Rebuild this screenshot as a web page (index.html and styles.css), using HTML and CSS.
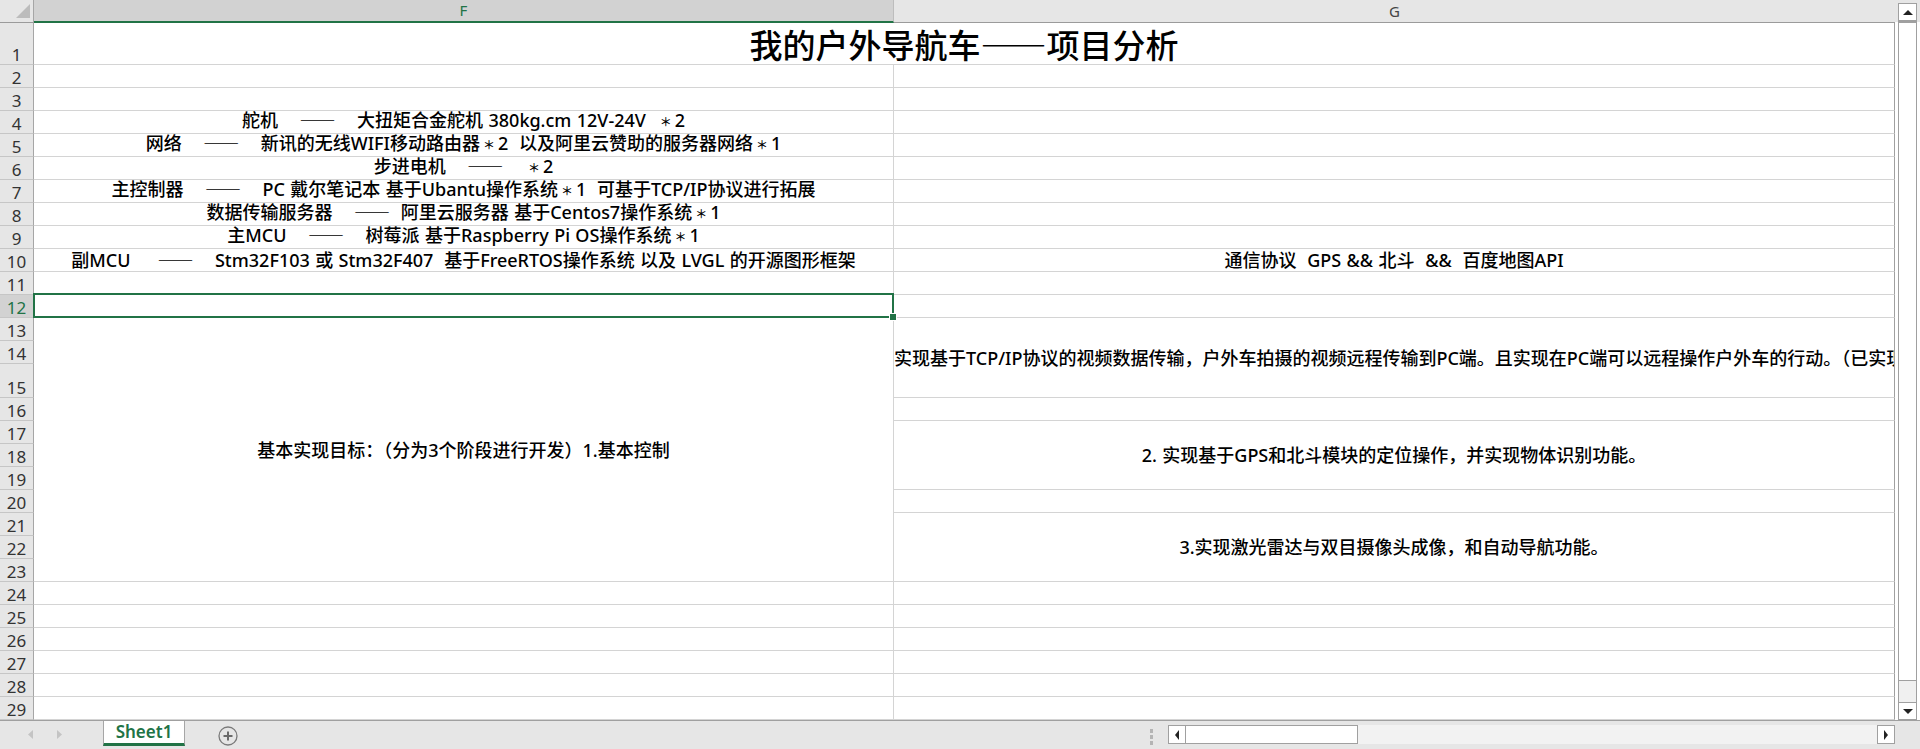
FILE: index.html
```html
<!DOCTYPE html>
<html lang="zh-CN">
<head>
<meta charset="utf-8">
<title>我的户外导航车——项目分析</title>
<link rel="stylesheet" href="styles.css">
</head>
<body>
<div class="app">
  <div class="main">
    <div class="sheet">
      <div class="corner"><svg width="33" height="22" viewBox="0 0 33 22"><polygon points="16,18 30,18 30,4" fill="#bcbcbc"/></svg></div>
      <div class="colhead active">F</div>
      <div class="colhead last">G</div>

      <div class="rh">1</div>
      <div class="c title">我的户外导航车——项目分析</div>

      <div class="rh">2</div><div class="c"></div><div class="c g"></div>
      <div class="rh">3</div><div class="c"></div><div class="c g"></div>
      <div class="rh">4</div><div class="c"><span class="t">舵机    <span class="d">——</span>    大扭矩合金舵机 380kg.cm 12V-24V  <span class="a">＊</span>2</span></div><div class="c g"></div>
      <div class="rh">5</div><div class="c"><span class="t">网络    <span class="d">——</span>    新讯的无线WIFI移动路由器<span class="a">＊</span>2  以及阿里云赞助的服务器网络<span class="a">＊</span>1</span></div><div class="c g"></div>
      <div class="rh">6</div><div class="c"><span class="t">步进电机    <span class="d">——</span>    <span class="a">＊</span>2</span></div><div class="c g"></div>
      <div class="rh">7</div><div class="c"><span class="t">主控制器    <span class="d">——</span>    PC 戴尔笔记本 基于Ubantu操作系统<span class="a">＊</span>1  可基于TCP/IP协议进行拓展</span></div><div class="c g"></div>
      <div class="rh">8</div><div class="c"><span class="t">数据传输服务器    <span class="d">——</span>  阿里云服务器 基于Centos7操作系统<span class="a">＊</span>1</span></div><div class="c g"></div>
      <div class="rh">9</div><div class="c"><span class="t">主MCU    <span class="d">——</span>    树莓派 基于Raspberry Pi OS操作系统<span class="a">＊</span>1</span></div><div class="c g"></div>
      <div class="rh">10</div><div class="c"><span class="t">副MCU     <span class="d">——</span>    Stm32F103 或 Stm32F407  基于FreeRTOS操作系统 以及 LVGL 的开源图形框架</span></div><div class="c g">通信协议  GPS &amp;&amp; 北斗  &amp;&amp;  百度地图API</div>
      <div class="rh">11</div><div class="c"></div><div class="c g"></div>
      <div class="rh selrow">12</div><div class="c selcell"></div><div class="c g"></div>
      <div class="rh">13</div><div class="c mid span11">基本实现目标：（分为3个阶段进行开发）1.基本控制</div><div class="c g mid span3 left">实现基于TCP/IP协议的视频数据传输，户外车拍摄的视频远程传输到PC端。且实现在PC端可以远程操作户外车的行动。（已实现）</div>
      <div class="rh">14</div>
      <div class="rh">15</div>
      <div class="rh">16</div><div class="c g"></div>
      <div class="rh">17</div><div class="c g mid span3">2. 实现基于GPS和北斗模块的定位操作，并实现物体识别功能。</div>
      <div class="rh">18</div>
      <div class="rh">19</div>
      <div class="rh">20</div><div class="c g"></div>
      <div class="rh">21</div><div class="c g mid span3">3.实现激光雷达与双目摄像头成像，和自动导航功能。</div>
      <div class="rh">22</div>
      <div class="rh">23</div>
      <div class="rh">24</div><div class="c"></div><div class="c g"></div>
      <div class="rh">25</div><div class="c"></div><div class="c g"></div>
      <div class="rh">26</div><div class="c"></div><div class="c g"></div>
      <div class="rh">27</div><div class="c"></div><div class="c g"></div>
      <div class="rh">28</div><div class="c"></div><div class="c g"></div>
      <div class="rh">29</div><div class="c"></div><div class="c g"></div>
    </div>
    <div class="vscroll">
      <div class="vbtn"><span class="tri-up"></span></div>
      <div class="vthumb"></div>
      <div class="vtrack"></div>
      <div class="vbtn"><span class="tri-down"></span></div>
    </div>
  </div>
  <div class="tabbar">
    <div class="nav">
      <svg width="103" height="28" viewBox="0 0 103 28"><polygon points="33,9 33,18 28,13.5" fill="#c4c4c4"/><polygon points="57,9 57,18 62,13.5" fill="#c4c4c4"/></svg>
    </div>
    <div class="tab">Sheet1</div>
    <div class="add"><svg width="20" height="20" viewBox="0 0 20 20"><circle cx="10" cy="10" r="9" fill="none" stroke="#7a7a7a" stroke-width="1.3"/><path d="M10 5.5V14.5M5.5 10H14.5" stroke="#6a6a6a" stroke-width="2"/></svg></div>
    <div class="spacer"></div>
    <div class="split"><i></i><i></i><i></i></div>
    <div class="hscroll">
      <div class="hbtn"><span class="tri-left"></span></div>
      <div class="hthumb"></div>
      <div class="htrack"></div>
      <div class="hbtn"><span class="tri-right"></span></div>
    </div>
  </div>
</div>
</body>
</html>
```

FILE: styles.css
```css
html, body {
  margin: 0;
  padding: 0;
  background: #ffffff;
}

body {
  width: 1920px;
  height: 749px;
  overflow: hidden;
  font-family: "Noto Sans", "Noto Sans CJK SC", sans-serif;
  color: #000;
}

.app {
  display: flex;
  flex-direction: column;
  width: 1920px;
  height: 749px;
}

.main {
  display: flex;
  height: 720px;
}

.sheet {
  display: grid;
  grid-template-columns: 34px 860px 1001px;
  grid-template-rows: 23px 42px repeat(13, 23px) 34px repeat(14, 23px);
  width: 1895px;
}

/* headers */
.corner {
  background: #e6e6e6;
  border-right: 1px solid #a6a6a6;
  border-bottom: 1px solid #9b9b9b;
  box-sizing: border-box;
}
.corner svg { display: block; }

.colhead {
  background: #e6e6e6;
  box-sizing: border-box;
  border-right: 1px solid #bdbdbd;
  border-bottom: 1px solid #9b9b9b;
  font-size: 15px;
  line-height: 21px;
  text-align: center;
  color: #444;
}
.colhead.active {
  background: #d2d2d2;
  color: #217346;
  border-bottom: 2px solid #217346;
}
.colhead.last {
  border-right: none;
  line-height: 22px;
}

.rh {
  background: #e6e6e6;
  box-sizing: border-box;
  border-right: 1px solid #a6a6a6;
  border-bottom: 1px solid #c6c6c6;
  display: flex;
  align-items: flex-end;
  justify-content: center;
  font-size: 17px;
  line-height: 17px;
  padding-bottom: 1px;
  color: #333;
}
.rh.selrow {
  background: #d2d2d2;
  color: #217346;
}

/* cells */
.c {
  box-sizing: border-box;
  border-right: 1px solid #d4d4d4;
  border-bottom: 1px solid #d4d4d4;
  display: flex;
  align-items: flex-end;
  justify-content: center;
  font-size: 18px;
  font-weight: 500;
  line-height: 18px;
  padding-bottom: 2px;
  white-space: pre;
  word-spacing: 0.7px;
}
.t {
  display: block;
  white-space: pre;
}
.d {
  font-family: "Noto Sans CJK SC", sans-serif;
}
.a {
  font-family: "Noto Sans CJK SC", sans-serif;
  font-size: 12px;
  margin: 0 3px;
}
.c.g {
  border-right-color: #a0a0a0;
}
.c.title {
  grid-column: span 2;
  border-right-color: #a0a0a0;
  font-family: "Noto Sans CJK SC", sans-serif;
  font-size: 33px;
  font-weight: 500;
  line-height: 33px;
  padding-bottom: 3px;
}
.c.mid {
  align-items: center;
  padding-bottom: 0;
}
.c.left {
  justify-content: flex-start;
  overflow: hidden;
}
.span11 { grid-row: span 11; }
.span3 { grid-row: span 3; }

.c.selcell {
  position: relative;
}
.c.selcell::after {
  content: "";
  position: absolute;
  left: -1px;
  top: -2px;
  right: -1px;
  bottom: -1px;
  border: 2px solid #217346;
  z-index: 2;
}
.c.selcell::before {
  content: "";
  position: absolute;
  right: -4px;
  bottom: -4px;
  width: 6px;
  height: 6px;
  background: #217346;
  border: 1px solid #fff;
  z-index: 3;
}

/* vertical scrollbar */
.vscroll {
  width: 25px;
  height: 720px;
  box-sizing: border-box;
  padding: 3px 3px 0 3px;
  background: linear-gradient(#e6e6e6 0, #e6e6e6 22px, #ffffff 22px);
  display: flex;
  flex-direction: column;
}
.vbtn {
  height: 18px;
  box-sizing: border-box;
  border: 1px solid #a0a0a0;
  background: #fff;
  display: flex;
  align-items: center;
  justify-content: center;
  flex: none;
}
.vthumb {
  height: 660px;
  flex: none;
  box-sizing: border-box;
  border: 1px solid #a0a0a0;
  border-top: 2px solid #a0a0a0;
  background: #fff;
}
.vtrack {
  flex: 1;
  background: #f0f0f0;
  border-left: 1px solid #a0a0a0;
  border-right: 1px solid #a0a0a0;
}
.tri-up {
  width: 0; height: 0;
  border-left: 5px solid transparent;
  border-right: 5px solid transparent;
  border-bottom: 5px solid #222;
}
.tri-down {
  width: 0; height: 0;
  border-left: 5px solid transparent;
  border-right: 5px solid transparent;
  border-top: 5px solid #222;
}

/* tab bar */
.tabbar {
  height: 29px;
  box-sizing: border-box;
  background: #e6e6e6;
  border-top: 1px solid #a0a0a0;
  display: flex;
  align-items: flex-start;
}
.nav {
  width: 103px;
  height: 28px;
  flex: none;
}
.nav svg { display: block; }
.tab {
  width: 82px;
  height: 25px;
  flex: none;
  box-sizing: border-box;
  background: #fff;
  border-left: 1px solid #a6a6a6;
  border-right: 1px solid #a6a6a6;
  border-bottom: 3px solid #217346;
  color: #217346;
  font-size: 17px;
  font-weight: 600;
  line-height: 21px;
  text-align: center;
}
.add {
  margin-left: 33px;
  margin-top: 5px;
  width: 20px;
  height: 20px;
  flex: none;
}
.add svg { display: block; }
.spacer { flex: 1; }
.split {
  width: 3px;
  margin-top: 8px;
  margin-right: 15px;
  display: flex;
  flex-direction: column;
  gap: 2px;
}
.split i {
  display: block;
  width: 3px;
  height: 4px;
  background: #b4b4b4;
}
.hscroll {
  width: 727px;
  height: 19px;
  margin-top: 4px;
  margin-right: 25px;
  display: flex;
  flex: none;
}
.hbtn {
  width: 18px;
  flex: none;
  box-sizing: border-box;
  border: 1px solid #a0a0a0;
  background: #fff;
  display: flex;
  align-items: center;
  justify-content: center;
}
.hthumb {
  width: 172px;
  flex: none;
  box-sizing: border-box;
  border: 1px solid #a0a0a0;
  border-left: none;
  background: #fff;
}
.htrack {
  flex: 1;
  background: #f2f2f2;
}
.tri-left {
  width: 0; height: 0;
  border-top: 5px solid transparent;
  border-bottom: 5px solid transparent;
  border-right: 4px solid #222;
}
.tri-right {
  width: 0; height: 0;
  border-top: 5px solid transparent;
  border-bottom: 5px solid transparent;
  border-left: 4px solid #222;
}
```
